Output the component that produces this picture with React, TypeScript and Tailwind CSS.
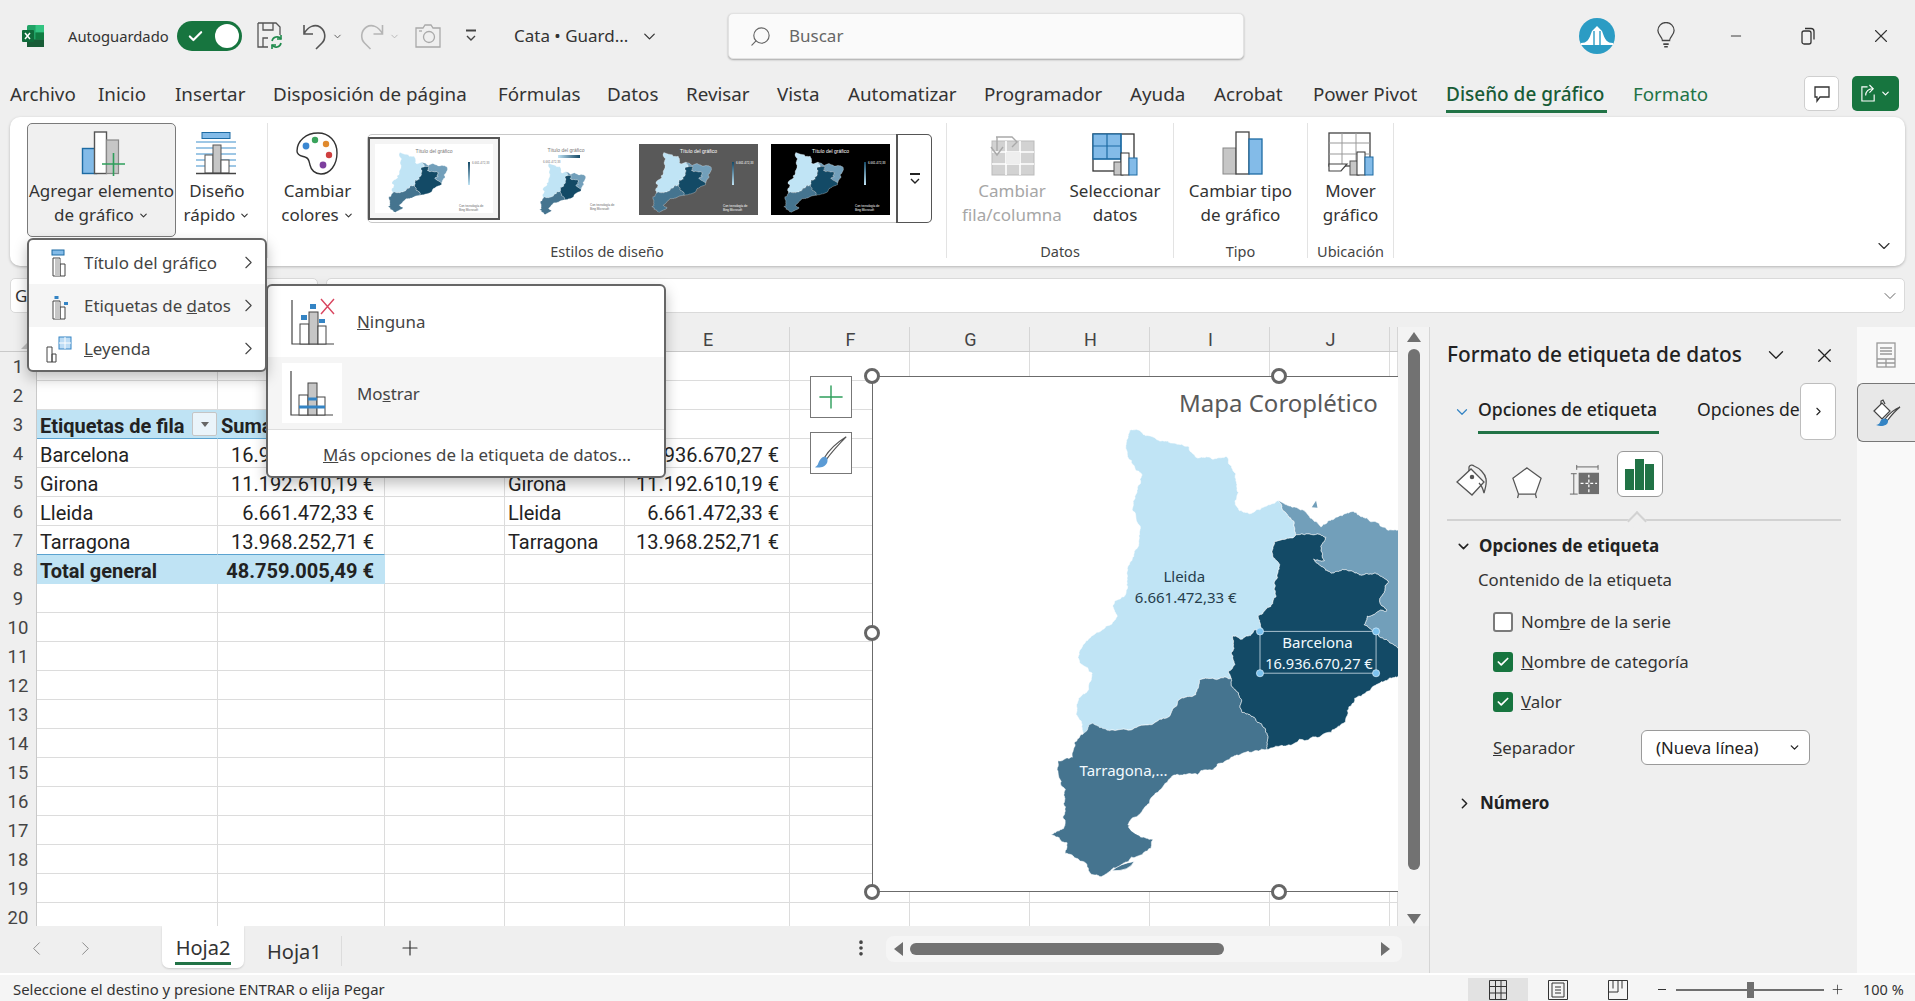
import React from "react";
import { Plus, ChevronDown, ChevronRight, ChevronLeft, X, Search, Check, MoreVertical, Minus } from "lucide-react";

const ui = "font-['Noto_Sans',sans-serif]";
const cellFont = "font-['Roboto',sans-serif]";

// map outlines, in the coordinates of a 1960 x 1960 board
const LLEIDA = "755,225 775,222 800,240 850,255 885,262 920,270 940,300 985,305 1025,298 1040,325 1052,360 1060,400 1050,425 1062,450 1100,455 1130,440 1172,422 1185,450 1215,480 1220,518 1160,538 1155,570 1175,600 1160,650 1165,690 1145,720 1115,745 1125,780 1070,810 1045,800 1040,850 1050,880 1032,900 1040,920 975,920 950,925 940,965 900,975 860,1030 800,1050 700,1065 625,1075 620,1040 605,1020 612,975 640,950 650,905 610,860 630,820 665,790 700,770 720,745 708,715 745,680 755,600 770,560 785,500 765,430 775,400 790,350 750,300 745,260";
const GIRONA = "1172,422 1210,440 1245,450 1260,470 1290,495 1330,470 1380,452 1420,470 1480,505 1540,495 1600,500 1640,530 1650,575 1625,640 1590,690 1605,740 1570,790 1540,860 1506,835 1480,815 1440,790 1412,770 1420,745 1475,730 1455,700 1480,650 1440,625 1400,630 1360,615 1320,625 1290,605 1270,585 1300,590 1290,550 1305,525 1250,515 1220,518 1215,480 1185,450";
const BARCELONA = "1160,538 1220,518 1250,515 1305,525 1290,550 1300,590 1270,585 1290,605 1320,625 1360,615 1400,630 1440,625 1480,650 1455,700 1475,730 1420,745 1412,770 1440,790 1480,815 1506,835 1540,860 1540,895 1506,915 1450,935 1385,975 1345,1050 1320,1070 1230,1090 1140,1118 1135,1060 1105,1030 1070,1015 1060,960 1040,940 1040,920 1032,900 1050,880 1040,850 1045,800 1070,810 1125,780 1115,745 1145,720 1165,690 1160,650 1175,600 1155,570";
const TARRAGONA = "625,1075 650,1045 680,1060 700,1065 800,1050 860,1030 900,975 940,965 950,925 975,920 1040,920 1040,940 1060,960 1070,1015 1105,1030 1135,1060 1140,1118 1060,1135 1000,1160 945,1190 880,1190 850,1220 810,1270 750,1330 775,1355 820,1370 815,1395 760,1420 710,1450 675,1475 645,1465 635,1440 575,1410 580,1380 535,1358 570,1340 570,1270 575,1230 552,1175 555,1150 595,1140 600,1100";

const noise = (x: number, y: number) => {
  const v = Math.sin(x * 12.9898 + y * 78.233) * 43758.5453;
  return v - Math.floor(v) - 0.5;
};

// roughens an outline, same result on both sides of a shared border
const rough = (outline: string) => {
  let pts = outline.split(" ").map((p) => p.split(",").map(Number));
  for (let d = 0; d < 4; d++) {
    const next: number[][] = [];
    pts.forEach((a, i) => {
      const b = pts[(i + 1) % pts.length];
      const mx = (a[0] + b[0]) / 2;
      const my = (a[1] + b[1]) / 2;
      const len = Math.hypot(a[0] - b[0], a[1] - b[1]);
      const amp = d === 0 ? 0.14 : 0.34;
      next.push(a, [mx + noise(mx, my) * len * amp, my + noise(my, mx) * len * amp]);
    });
    pts = next;
  }
  return "M" + pts.map((p) => `${p[0].toFixed(1)} ${p[1].toFixed(1)}`).join("L") + "z";
};

const SHAPES = { l: rough(LLEIDA), g: rough(GIRONA), b: rough(BARCELONA), t: rough(TARRAGONA) };

const Regions = ({ line = "#ffffff", width = 2 }: { line?: string; width?: number }) => (
  <g stroke={line} strokeWidth={width}>
    <path d={SHAPES.l} fill="#c0e4f5" />
    <path d={SHAPES.g} fill="#729fba" />
    <path d={SHAPES.t} fill="#45748f" />
    <path d={SHAPES.b} fill="#134a66" />
  </g>
);

const Thumb = ({ box, text, legendText, wide, mapCls, bg }: { box: string; text: string; legendText: string; wide?: boolean; mapCls: string; bg: string }) => (
  <div className={`relative overflow-hidden ${box} ${bg}`}>
    <p className={`text-center text-[5px] leading-[8px] pt-[3px] font-['Liberation_Sans',sans-serif] ${text}`}>Título del gráfico</p>
    <svg viewBox="520 210 1140 1280" preserveAspectRatio="none" className={`absolute ${mapCls}`}>
      <Regions width={6} />
    </svg>
    {wide ? (
      <div className="absolute left-[52px] top-[12px] h-[3px] w-[22px] bg-gradient-to-r from-[#c0e4f5] to-[#134a66]" />
    ) : (
      <div className="absolute left-[93px] top-[18px] h-[23px] w-[2px] bg-gradient-to-b from-[#134a66] to-[#c0e4f5]" />
    )}
    <p className={`absolute text-[3px] leading-[4px] font-['Liberation_Sans',sans-serif] ${text} ${wide ? "left-[37px] top-[17px]" : "left-[97px] top-[17px]"}`}>6.661.472,33</p>
    <p className={`absolute left-[84px] top-[60px] text-[3px] leading-[4px] font-['Liberation_Sans',sans-serif] ${legendText}`}>
      Con tecnología de
      <br />
      Bing Microsoft
    </p>
  </div>
);

const AddElementIcon = () => (
  <svg viewBox="0 0 46 46" className="w-[46px] h-[46px]">
    <rect x="3.5" y="17.5" width="14" height="25" fill="#83bbe8" stroke="#1d6ba3" strokeWidth="1.4" />
    <rect x="15.5" y="1" width="12" height="41.5" fill="#fff" stroke="#555" strokeWidth="1.4" />
    <rect x="27.5" y="9" width="12" height="33.5" fill="#c6c6c6" stroke="#888" strokeWidth="1.2" />
    <path d="M34.5 22v23M23 33h23" stroke="#2e9e5b" strokeWidth="1.6" />
  </svg>
);

const QuickLayoutIcon = () => (
  <svg viewBox="0 0 46 46" className="w-[46px] h-[46px]">
    <rect x="8" y="1.5" width="28" height="6" fill="#83bbe8" stroke="#1d6ba3" />
    <path d="M2 11h40M2 17h40M2 23h40M2 29h40M2 35h40" stroke="#3f8fcb" strokeWidth="1.2" />
    <rect x="11" y="24" width="8" height="18" fill="#fff" stroke="#555" />
    <rect x="19" y="14" width="8" height="28" fill="#c6c6c6" stroke="#555" />
    <rect x="27" y="29" width="8" height="13" fill="#fff" stroke="#555" />
    <path d="M2 42.5h40" stroke="#444" strokeWidth="1.3" />
  </svg>
);

const PaletteIcon = () => (
  <svg viewBox="0 0 46 46" className="w-[46px] h-[46px]">
    <path d="M23 2C11 2 2 10 2 20c0 5 5 5 8 6 4 1 4 4 5 8 1 5 5 9 11 9 9 0 16-9 16-21S34 2 23 2z" fill="#fff" stroke="#333" strokeWidth="1.4" />
    <circle cx="11" cy="15" r="3.4" fill="#3a87d1" />
    <circle cx="20" cy="9" r="3.2" fill="#3aa35c" />
    <circle cx="31" cy="13" r="3.2" fill="#e08a2e" />
    <circle cx="34" cy="24" r="3.2" fill="#cf3f3f" />
    <circle cx="28" cy="34" r="3.4" fill="#7d3f9e" />
  </svg>
);

const SwitchIcon = () => (
  <svg viewBox="0 0 48 46" className="w-[48px] h-[46px]">
    <rect x="4" y="10" width="42" height="34" fill="#d2d2d2" stroke="#bbb" />
    <path d="M18 10v34M32 10v34M4 21h42M4 33h42" stroke="#fff" strokeWidth="1.6" />
    <rect x="18" y="21" width="14" height="12" fill="#eee" />
    <path d="M8 6h16l5 5-5 5M9 6v14M3 16l6 8 6-8" fill="none" stroke="#a9a9a9" strokeWidth="1.4" />
  </svg>
);

const SelectDataIcon = () => (
  <svg viewBox="0 0 46 46" className="w-[46px] h-[46px]">
    <rect x="1" y="3" width="41" height="37" fill="#fff" stroke="#333" strokeWidth="1.3" />
    <rect x="1" y="3" width="28" height="25" fill="#83bbe8" stroke="#1d6ba3" strokeWidth="1.3" />
    <path d="M15 3v25M1 15h28M29 3v37M1 28h41" stroke="#1d6ba3" strokeWidth="1.2" />
    <rect x="22" y="31" width="9" height="13" fill="#c6c6c6" stroke="#555" />
    <rect x="29" y="22" width="8" height="22" fill="#fff" stroke="#333" />
    <rect x="37" y="27" width="8" height="17" fill="#83bbe8" stroke="#1d6ba3" />
  </svg>
);

const ChangeTypeIcon = () => (
  <svg viewBox="0 0 46 46" className="w-[46px] h-[46px]">
    <rect x="5" y="17" width="13" height="26" fill="#c6c6c6" stroke="#888" />
    <rect x="18" y="1" width="13" height="42" fill="#fff" stroke="#444" strokeWidth="1.3" />
    <rect x="31" y="8" width="13" height="35" fill="#83bbe8" stroke="#1d6ba3" strokeWidth="1.3" />
  </svg>
);

const MoveIcon = () => (
  <svg viewBox="0 0 46 46" className="w-[46px] h-[46px]">
    <rect x="1" y="2" width="41" height="33" fill="#fff" stroke="#444" strokeWidth="1.3" />
    <path d="M14 2v33M28 2v33M1 12h41M1 23h41" stroke="#999" />
    <path d="M1 33v7h12l6-7z" fill="#fff" stroke="#444" strokeWidth="1.2" />
    <rect x="22" y="30" width="9" height="14" fill="#c6c6c6" stroke="#555" />
    <rect x="29" y="21" width="8" height="23" fill="#fff" stroke="#333" />
    <rect x="37" y="26" width="8" height="18" fill="#83bbe8" stroke="#1d6ba3" />
  </svg>
);

const RibbonButton = ({ lines, icon, width, open, muted, arrow }: { lines: string[]; icon: React.ReactNode; width: string; open?: boolean; muted?: boolean; arrow?: boolean }) => (
  <div className={`${width} h-[114px] pt-[7px] flex flex-col items-center rounded-[5px] border ${open ? "border-[#7a7a7a] bg-[#f0f0f0]" : "border-transparent"}`}>
    <div className="h-[46px] flex justify-center">{icon}</div>
    <div className={`text-[17px] leading-[24px] mt-[2px] text-center whitespace-nowrap ${muted ? "text-[#a6a6a6]" : "text-[#333]"}`}>
      <div>{lines[0]}</div>
      <div className="flex items-center justify-center gap-[4px]">
        {lines[1]}
        {arrow && <ChevronDown size={11} strokeWidth={2.4} />}
      </div>
    </div>
  </div>
);

const Group = ({ width, label, children }: { width: string; label?: string; children: React.ReactNode }) => (
  <div className={`${width} h-[135px] border-r border-[#e3e3e3] flex flex-col`}>
    <div className="h-[114px] flex">{children}</div>
    {label && <div className="flex-1 text-center text-[14.5px] leading-[19px] pt-[5px] text-[#444] whitespace-nowrap">{label}</div>}
  </div>
);

const TITLE_TABS = [
  { label: "Archivo", w: "w-[88px]" },
  { label: "Inicio", w: "w-[77px]" },
  { label: "Insertar", w: "w-[98px]" },
  { label: "Disposición de página", w: "w-[225px]" },
  { label: "Fórmulas", w: "w-[109px]" },
  { label: "Datos", w: "w-[79px]" },
  { label: "Revisar", w: "w-[91px]" },
  { label: "Vista", w: "w-[71px]" },
  { label: "Automatizar", w: "w-[136px]" },
  { label: "Programador", w: "w-[146px]" },
  { label: "Ayuda", w: "w-[84px]" },
  { label: "Acrobat", w: "w-[99px]" },
  { label: "Power Pivot", w: "w-[133px]" },
];

const TitleBar = () => (
  <div className="h-[72px] flex items-center pl-[21px] text-[#333]">
    <svg viewBox="0 0 24 24" className="w-[24px] h-[24px] shrink-0">
      <rect x="6" y="1" width="17" height="22" rx="1.5" fill="#21a366" />
      <rect x="14.5" y="1" width="8.5" height="7.5" fill="#33c481" />
      <rect x="14.5" y="8.5" width="8.5" height="7" fill="#107c41" />
      <rect x="6" y="15.5" width="17" height="7.5" fill="#185c37" />
      <rect x="1" y="6" width="12" height="12" rx="1" fill="#0f6b3a" />
      <path d="M4 9l5 6M9 9l-5 6" stroke="#fff" strokeWidth="1.5" />
    </svg>
    <span className="ml-[23px] w-[100px] text-[14.8px] whitespace-nowrap">Autoguardado</span>
    <div className="ml-[9px] w-[65px] h-[30px] rounded-full bg-[#17753f] flex items-center justify-between pl-[10px] pr-[3px]">
      <Check size={17} strokeWidth={3} className="text-white" />
      <span className="w-[24px] h-[24px] rounded-full bg-white" />
    </div>
    <svg viewBox="0 0 26 30" className="ml-[15px] w-[26px] h-[30px]" fill="none" stroke="#555" strokeWidth="1.3">
      <path d="M1 2h18l4 4v8M1 2v24h10M6 2v7h10V2M6 26v-9h5" />
      <path d="M15 20a5 5 0 0 1 9-2M24 22a5 5 0 0 1-9 2" stroke="#1f8a4c" strokeWidth="1.6" />
      <path d="M24 14v4h-4M15 28v-4h4" stroke="#1f8a4c" strokeWidth="1.6" />
    </svg>
    <svg viewBox="0 0 26 30" className="ml-[19px] w-[26px] h-[30px]" fill="none" stroke="#555" strokeWidth="1.6">
      <path d="M2 4v9h9M2 13C6 5 13 3 18 6c6 4 6 12 2 16l-6 6" />
    </svg>
    <ChevronDown size={11} className="ml-[4px] text-[#555]" strokeWidth={2} />
    <svg viewBox="0 0 26 30" className="ml-[15px] w-[27px] h-[30px]" fill="none" stroke="#b5b5b5" strokeWidth="1.6">
      <path d="M24 4v9h-9M24 13C20 5 13 3 8 6c-6 4-6 12-2 16l6 6" />
    </svg>
    <ChevronDown size={11} className="ml-[4px] text-[#b5b5b5]" strokeWidth={2} />
    <svg viewBox="0 0 26 30" className="ml-[15px] w-[26px] h-[30px]" fill="none" stroke="#a9a9a9" strokeWidth="1.3">
      <path d="M1 7h7l2-3h6l2 3h7v19H1z" />
      <circle cx="14" cy="16" r="5.5" />
      <path d="M4 10h3" />
    </svg>
    <svg viewBox="0 0 12 14" className="ml-[24px] w-[12px] h-[14px]" fill="none" stroke="#444" strokeWidth="1.4">
      <path d="M1 1.5h10" strokeWidth="2" />
      <path d="M2 7l4 4 4-4" />
    </svg>
    <span className="ml-[37px] w-[119px] text-[17px] whitespace-nowrap">Cata • Guard...</span>
    <ChevronDown size={19} className="ml-[7px] text-[#333]" strokeWidth={1.6} />
    <div className="ml-[69px] w-[516px] h-[46px] rounded-[5px] bg-[#fafafa] border border-[#e2e2e2] shadow-[0_1px_2px_rgba(0,0,0,0.3)] flex items-center pl-[20px] text-[#666]">
      <Search size={23} strokeWidth={1.2} className="-scale-x-100" />
      <span className="ml-[17px] text-[17px]">Buscar</span>
    </div>
    <svg viewBox="0 0 36 36" className="ml-[335px] w-[36px] h-[36px]">
      <circle cx="18" cy="18" r="18" fill="#2b9cc4" />
      <path d="M2 25c6 0 8-3 11-12l5-5 5 5c3 9 5 12 11 12v2H2z" fill="#fff" />
      <path d="M15 13v14M21 13v14" stroke="#2b9cc4" strokeWidth="1.4" />
    </svg>
    <svg viewBox="0 0 20 30" className="ml-[42px] w-[18px] h-[28px]" fill="none" stroke="#444" strokeWidth="1.4">
      <path d="M6 20c0-4-5-6-5-11a9 9 0 0 1 18 0c0 5-5 7-5 11z" />
      <path d="M7 24h6M8 27h4" strokeWidth="1.8" />
    </svg>
    <Minus size={16} strokeWidth={1.4} className="ml-[53px] text-[#333]" />
    <svg viewBox="0 0 14 18" className="ml-[57px] w-[14px] h-[18px]" fill="none" stroke="#333" strokeWidth="1.3">
      <rect x="1" y="4" width="9" height="13" rx="2" />
      <path d="M4 1.5h6a3 3 0 0 1 3 3v8" />
    </svg>
    <X size={22} strokeWidth={1.2} className="ml-[55px] text-[#333]" />
  </div>
);

const TabRow = () => (
  <div className="h-[45px] flex items-center pl-[10px] pr-[16px] text-[18.8px] text-[#333]">
    {TITLE_TABS.map((t) => (
      <div key={t.label} className={`${t.w} whitespace-nowrap`}>{t.label}</div>
    ))}
    <div className="w-[187px] text-[19px] font-medium text-[#185c37] relative whitespace-nowrap">
      Diseño de gráfico
      <span className="absolute left-0 w-[161px] top-[30px] h-[3px] bg-[#217346]" />
    </div>
    <div className="text-[#217346]">Formato</div>
    <div className="ml-auto -mt-[2px] w-[35px] h-[35px] rounded-[5px] bg-white border border-[#cfcfcf] flex items-center justify-center">
      <svg viewBox="0 0 18 18" className="w-[18px] h-[18px]" fill="none" stroke="#333" strokeWidth="1.3">
        <path d="M2 2h14v10H7l-3 4v-4H2z" />
      </svg>
    </div>
    <div className="ml-[13px] -mt-[2px] w-[47px] h-[35px] rounded-[5px] bg-[#17753f] flex items-center justify-center gap-[3px]">
      <svg viewBox="0 0 18 20" className="w-[17px] h-[19px]" fill="none" stroke="#fff" strokeWidth="1.2">
        <path d="M8 3H2v15h13v-7M6 12c0-4 3-7 7-7M10 1l4 4-4 4" />
      </svg>
      <ChevronDown size={11} strokeWidth={2.6} className="text-white" />
    </div>
  </div>
);

const Ribbon = () => (
  <div className="relative mx-[10px] h-[149px] bg-white rounded-[10px] shadow-[0_1px_3px_rgba(0,0,0,0.25)] flex pl-[17px] pt-[6px]">
    <Group width="w-[241px]">
      <RibbonButton width="w-[149px]" open arrow lines={["Agregar elemento", "de gráfico"]} icon={<AddElementIcon />} />
      <RibbonButton width="w-[82px]" arrow lines={["Diseño", "rápido"]} icon={<QuickLayoutIcon />} />
    </Group>
    <Group width="w-[679px]" label="Estilos de diseño">
      <RibbonButton width="w-[99px]" arrow lines={["Cambiar", "colores"]} icon={<PaletteIcon />} />
      <div className="mt-[11px] w-[565px] h-[89px] rounded-[5px] border border-[#c8c8c8] flex">
        <div className="mt-[2px] w-[132px] h-[83px] border-2 border-[#555] bg-[#f4f4f4] p-[5px]">
          <Thumb box="w-[118px] h-[69px]" bg="bg-white" text="text-[#777]" legendText="text-[#666]" mapCls="left-[12px] top-[8px] w-[61px] h-[61px]" />
        </div>
        <div className="ml-[6px] mt-[8px]">
          <Thumb box="w-[120px] h-[73px]" bg="bg-white" text="text-[#777]" legendText="text-[#666]" wide mapCls="left-[33px] top-[20px] w-[47px] h-[52px]" />
        </div>
        <div className="ml-[13px] mt-[9px]">
          <Thumb box="w-[119px] h-[71px]" bg="bg-[#595959]" text="text-white" legendText="text-white" mapCls="left-[12px] top-[8px] w-[61px] h-[61px]" />
        </div>
        <div className="ml-[13px] mt-[9px]">
          <Thumb box="w-[119px] h-[71px]" bg="bg-black" text="text-white" legendText="text-white" mapCls="left-[12px] top-[8px] w-[61px] h-[61px]" />
        </div>
        <div className="ml-auto w-[36px] -my-px -mr-px border-y border-r border-l-2 border-[#555] rounded-r-[5px] bg-white flex items-center justify-center">
          <svg viewBox="0 0 12 14" className="w-[12px] h-[14px]" fill="none" stroke="#222" strokeWidth="1.4">
            <path d="M1 2h10" strokeWidth="2" />
            <path d="M2 7l4 4 4-4" />
          </svg>
        </div>
      </div>
    </Group>
    <Group width="w-[227px]" label="Datos">
      <RibbonButton width="w-[130px]" muted lines={["Cambiar", "fila/columna"]} icon={<SwitchIcon />} />
      <RibbonButton width="w-[76px]" lines={["Seleccionar", "datos"]} icon={<SelectDataIcon />} />
    </Group>
    <Group width="w-[134px]" label="Tipo">
      <RibbonButton width="w-[134px]" lines={["Cambiar tipo", "de gráfico"]} icon={<ChangeTypeIcon />} />
    </Group>
    <Group width="w-[86px]" label="Ubicación">
      <RibbonButton width="w-[86px]" lines={["Mover", "gráfico"]} icon={<MoveIcon />} />
    </Group>
    <ChevronDown size={20} strokeWidth={1.4} className="absolute right-[11px] bottom-[10px] text-[#333]" />
  </div>
);

const FormulaBar = () => (
  <div className="mt-[12px] mx-[10px] h-[35px] flex gap-[8px] text-[17px] text-[#333]">
    <div className="w-[308px] rounded-[5px] bg-white border border-[#dadada] pl-[4px] flex items-center">Gráfico 1</div>
    <div className="flex-1 rounded-[5px] bg-white border border-[#dadada] flex items-center justify-end pr-[4px]">
      <ChevronDown size={20} strokeWidth={1.2} className="text-[#666]" />
    </div>
  </div>
);

const COLS = [
  { id: "A", w: "w-[181px]" },
  { id: "B", w: "w-[167px]" },
  { id: "C", w: "w-[120px]" },
  { id: "D", w: "w-[120px]" },
  { id: "E", w: "w-[165px]" },
  { id: "F", w: "w-[120px]" },
  { id: "G", w: "w-[120px]" },
  { id: "H", w: "w-[120px]" },
  { id: "I", w: "w-[120px]" },
  { id: "J", w: "w-[120px]" },
  { id: "K", w: "w-[8px]" },
];

const ROWS: Record<number, string[]> = {
  3: ["Etiquetas de fila", "Suma de Total"],
  4: ["Barcelona", "16.936.670,27 €", "", "Barcelona", "16.936.670,27 €"],
  5: ["Girona", "11.192.610,19 €", "", "Girona", "11.192.610,19 €"],
  6: ["Lleida", "6.661.472,33 €", "", "Lleida", "6.661.472,33 €"],
  7: ["Tarragona", "13.968.252,71 €", "", "Tarragona", "13.968.252,71 €"],
  8: ["Total general", "48.759.005,49 €"],
};

const Cell = ({ row, col, w }: { row: number; col: number; w: string }) => {
  const text = ROWS[row]?.[col] ?? "";
  const accent = (row === 3 || row === 8) && col < 2;
  const money = col === 1 || col === 4;
  return (
    <div
      className={`${w} shrink-0 relative h-full pt-[3px] flex items-center whitespace-nowrap overflow-hidden border-r border-b border-[#dcdcdc] ${money && row > 3 ? "justify-end pr-[10px]" : "pl-[3px]"} ${accent ? "bg-[#bfe3f4] font-bold border-r-transparent" : ""} ${row === 3 && col < 2 ? "border-b-[#5ba3d0]" : ""} ${row === 7 && col < 2 ? "border-b-[#5ba3d0]" : ""} ${row === 8 && col < 2 ? "border-b-[#bfe3f4]" : ""}`}
    >
      {text}
      {row === 3 && col === 0 && (
        <span className="absolute right-0 top-[2px] w-[25px] h-[24px] bg-[#eaf4fa] border border-[#c5c5c5] rounded-[2px] flex items-center justify-center">
          <span className="w-0 h-0 border-x-[4px] border-x-transparent border-t-[5px] border-t-[#666]" />
        </span>
      )}
    </div>
  );
};

const Handle = ({ pos }: { pos: string }) => (
  <span className={`absolute w-[16px] h-[16px] rounded-full bg-white border-[3px] border-[#666] ${pos}`} />
);

const Chart = () => (
  <div className="absolute left-[872px] top-[49px] w-[600px] h-[516px] bg-white border border-[#6b6b6b]">
    <svg viewBox="0 0 1960 1960" className="absolute left-[-13px] top-[-27px] w-[700px] h-[700px]">
      <Regions width={1.5} />
      <path d="M1265 440l12-18 4 20z" fill="#729fba" />
      <path d="M750 1335q20-14 36 18 12 6 20 10-40 0-56-28z" fill="#fff" />
      <path d="M706 1458q22-20 62-26-14 28-62 26z" fill="#45748f" stroke="#fff" strokeWidth="2" />
      <g fontFamily="Noto Sans, sans-serif" fontSize="42" textAnchor="middle">
        <text x="908" y="650" fill="#263d4c">Lleida</text>
        <text x="912" y="708" fill="#263d4c">6.661.472,33 €</text>
        <text x="1281" y="834" fill="#f2fafe">Barcelona</text>
        <text x="1285" y="892" fontSize="41" fill="#f2fafe">16.936.670,27 €</text>
        <text x="738" y="1192" fill="#f2fafe">Tarragona,...</text>
      </g>
      <rect x="1120" y="788" width="325" height="117" fill="none" stroke="#9fb9c8" strokeWidth="3" />
      {[[1120, 788], [1445, 788], [1120, 905], [1445, 905]].map(([cx, cy]) => (
        <circle key={`${cx}-${cy}`} cx={cx} cy={cy} r="10" fill="#7cc2ee" stroke="#d8eefc" strokeWidth="2" />
      ))}
    </svg>
    <p className={`absolute left-[306px] top-[11px] text-[24px] leading-[30px] text-[#595959] whitespace-nowrap ${ui}`}>Mapa Coroplético</p>
    <Handle pos="left-[-9px] top-[-9px]" />
    <Handle pos="left-[398px] top-[-9px]" />
    <Handle pos="left-[-9px] top-[248px]" />
    <Handle pos="left-[-9px] bottom-[-9px]" />
    <Handle pos="left-[398px] bottom-[-9px]" />
  </div>
);

const Sheet = () => (
  <div className={`relative w-[1398px] h-[599px] overflow-hidden bg-white ${cellFont} text-[20px] text-[#222]`}>
    <div className="flex h-[25px] bg-[#efefef] border-b border-[#c9c9c9]">
      <div className="w-[37px] shrink-0 relative">
        <span className="absolute right-[2px] bottom-[2px] w-0 h-0 border-l-[14px] border-l-transparent border-b-[14px] border-b-[#bdbdbd]" />
      </div>
      {COLS.map((c) => (
        <div key={c.id} className={`${c.w} shrink-0 border-r border-[#d5d5d5] flex items-center justify-center pl-[2px] text-[18px] text-[#444]`}>
          {c.id !== "K" && c.id}
        </div>
      ))}
    </div>
    {Array.from({ length: 20 }, (_, i) => i + 1).map((row) => (
      <div key={row} className="flex h-[29px]">
        <div className="w-[37px] shrink-0 bg-[#efefef] border-r border-[#c9c9c9] flex items-center justify-center pt-[3px] text-[18.5px] text-[#444]">{row}</div>
        {COLS.map((c, col) => (
          <Cell key={c.id} row={row} col={col} w={c.w} />
        ))}
      </div>
    ))}
    <div className="absolute left-[810px] top-[49px] w-[42px] h-[42px] bg-white border border-[#777] flex items-center justify-center">
      <Plus size={38} strokeWidth={0.9} className="text-[#2e9e5b]" />
    </div>
    <div className="absolute left-[810px] top-[105px] w-[42px] h-[42px] bg-white border border-[#777] flex items-center justify-center">
      <svg viewBox="0 0 40 40" className="w-[38px] h-[38px]">
        <path d="M36 3C30 9 20 20 15 27l-2-2C18 17 28 8 36 3z" fill="#fff" stroke="#555" strokeWidth="1.2" />
        <path d="M13 24c3 0 4 3 3 6-2 5-8 6-13 5 4-2 3-4 5-7 1-2 3-4 5-4z" fill="#5b9bd5" />
      </svg>
    </div>
    <Chart />
  </div>
);

const VScroll = () => (
  <div className="w-[31px] h-[599px] bg-[#f3f3f3] relative flex flex-col items-center">
    <span className="mt-[5px] w-0 h-0 border-x-[7px] border-x-transparent border-b-[10px] border-b-[#6f6f6f]" />
    <span className="mt-[7px] w-[12px] h-[521px] rounded-full bg-[#727272]" />
    <span className="mt-[44px] w-0 h-0 border-x-[7px] border-x-transparent border-t-[10px] border-t-[#6f6f6f]" />
  </div>
);

const SheetTabs = () => (
  <div className="h-[47px] flex items-start text-[#333]">
    <ChevronLeft size={23} strokeWidth={1} className="ml-[25px] mt-[11px] text-[#888]" />
    <ChevronRight size={23} strokeWidth={1} className="ml-[26px] mt-[11px] text-[#888]" />
    <div className="ml-[65px] w-[82px] h-[42px] bg-white rounded-b-[7px] shadow-[0_1px_2px_rgba(0,0,0,0.15)] flex flex-col items-center">
      <span className="text-[20px] leading-[26px] mt-[9px]">Hoja2</span>
      <span className="w-[56px] h-[3px] bg-[#217346] mt-[1px]" />
    </div>
    <span className="ml-[23px] text-[20px] leading-[26px] mt-[13px]">Hoja1</span>
    <span className="ml-[19px] mt-[10px] h-[30px] border-l border-[#dcdcdc]" />
    <Plus size={24} strokeWidth={1.2} className="ml-[56px] mt-[10px]" />
    <MoreVertical size={20} strokeWidth={2.4} className="ml-[429px] mt-[12px] text-[#444]" />
    <div className="ml-[15px] mt-[10px] w-[516px] h-[26px] rounded-[8px] bg-[#f5f5f5] flex items-center pl-[8px]">
      <span className="w-0 h-0 border-y-[7px] border-y-transparent border-r-[9px] border-r-[#6f6f6f]" />
      <span className="ml-[7px] w-[314px] h-[12px] rounded-full bg-[#727272]" />
      <span className="ml-[157px] w-0 h-0 border-y-[7px] border-y-transparent border-l-[9px] border-l-[#6f6f6f]" />
    </div>
  </div>
);

const CheckRow = ({ checked, label }: { checked?: boolean; label: React.ReactNode }) => (
  <div className="flex items-center h-[20px] mb-[20px]">
    <span className={`w-[20px] h-[20px] rounded-[3px] flex items-center justify-center ${checked ? "bg-[#17753f]" : "bg-white border-2 border-[#7a7a7a]"}`}>
      {checked && <Check size={14} strokeWidth={3} className="text-white" />}
    </span>
    <span className="ml-[8px] text-[16.8px] text-[#333] whitespace-nowrap">{label}</span>
  </div>
);

const FormatPane = () => (
  <div className="w-[428px] h-[646px] border-l border-[#d5d5d5] bg-[#efefef] pl-[17px] text-[#222]">
    <div className="h-[54px] flex items-center pt-[2px]">
      <span className="text-[20.8px] font-medium whitespace-nowrap w-[316px]">Formato de etiqueta de datos</span>
      <ChevronDown size={26} strokeWidth={1.2} />
      <X size={23} strokeWidth={1.3} className="ml-[24px]" />
    </div>
    <div className="h-[57px] flex items-start relative">
      <ChevronDown size={18} strokeWidth={1.6} className="mt-[22px] ml-[6px] text-[#3484c4]" />
      <div className="ml-[7px] w-[181px] h-[53px] border-b-[3px] border-[#217346] pt-[15px] text-[17.6px] font-medium whitespace-nowrap">Opciones de etiqueta</div>
      <div className="ml-[38px] w-[103px] overflow-hidden pt-[15px] text-[17.6px] whitespace-nowrap">Opciones de texto</div>
      <div className="w-[36px] h-[57px] mt-[2px] rounded-[6px] bg-white border border-[#bdbdbd] flex items-center justify-center">
        <ChevronRight size={13} strokeWidth={2} />
      </div>
    </div>
    <div className="mt-[21px] h-[62px] flex items-start relative border-b-2 border-[#d2d2d2] w-[394px]">
      <svg viewBox="0 0 34 34" className="mt-[4px] ml-[8px] w-[34px] h-[34px]" fill="none" stroke="#555" strokeWidth="1.3">
        <path d="M2 19L16 6l13 13-12 13z" fill="#fff" />
        <path d="M14 8V4a3 3 0 0 1 5-1c5 2 11 7 12 13 1 5-1 10-2 14-1-4-2-7-5-10" />
        <circle cx="17" cy="14" r="1.6" fill="#555" />
      </svg>
      <svg viewBox="0 0 34 34" className="mt-[5px] ml-[22px] w-[32px] h-[36px]" fill="#fff" stroke="#555" strokeWidth="1.3">
        <path d="M17 2l15 11-6 17H8L2 13z" />
        <path d="M8 30l-1 4M26 30l1 4" />
      </svg>
      <svg viewBox="0 0 34 34" className="mt-[5px] ml-[24px] w-[33px] h-[33px]">
        <path d="M10 3h22M10 1v5M32 1v5M4 10h6M7 10v21M3 31h8" fill="none" stroke="#666" />
        <rect x="12" y="9" width="21" height="22" fill="#6e6e6e" />
        <path d="M22.5 11v18M14 20h17" stroke="#fff" strokeWidth="1.3" strokeDasharray="3 2" />
      </svg>
      <div className="-mt-[8px] ml-[17px] w-[46px] h-[46px] rounded-[6px] bg-white border border-[#999] flex items-center justify-center">
        <svg viewBox="0 0 30 32" className="w-[30px] h-[32px]" fill="#217346">
          <rect x="0" y="11" width="9" height="21" />
          <rect x="10" y="1" width="9" height="31" />
          <rect x="20" y="6" width="9" height="26" />
        </svg>
      </div>
      <span className="absolute left-[183px] bottom-[-2px] w-[14px] h-[14px] rotate-45 translate-y-[7px] bg-[#efefef] border-l-2 border-t-2 border-[#d2d2d2]" />
    </div>
    <div className="mt-[15px] flex items-center h-[20px] pl-[8px]">
      <ChevronDown size={17} strokeWidth={2.2} />
      <span className="ml-[7px] text-[17px] font-bold">Opciones de etiqueta</span>
    </div>
    <p className="mt-[13px] ml-[31px] text-[16.8px] leading-[22px] text-[#333]">Contenido de la etiqueta</p>
    <div className="mt-[21px] ml-[46px]">
      <CheckRow label={<>Nom<span className="underline">b</span>re de la serie</>} />
      <CheckRow checked label={<><span className="underline">N</span>ombre de categoría</>} />
      <CheckRow checked label={<><span className="underline">V</span>alor</>} />
    </div>
    <div className="ml-[46px] -mt-[2px] flex items-center h-[35px]">
      <span className="w-[148px] text-[16.8px] text-[#333]"><span className="underline">S</span>eparador</span>
      <div className="w-[169px] h-[35px] rounded-[6px] bg-white border border-[#9a9a9a] flex items-center justify-between pl-[14px] pr-[8px] text-[16.8px]">
        (Nueva línea)
        <ChevronDown size={13} strokeWidth={2.4} />
      </div>
    </div>
    <div className="mt-[28px] pl-[9px] flex items-center h-[20px]">
      <ChevronRight size={17} strokeWidth={2.2} />
      <span className="ml-[7px] text-[17px] font-bold">Número</span>
    </div>
  </div>
);

const SideStrip = () => (
  <div className="w-[58px] h-[646px] bg-[#f9f9f9] flex flex-col items-stretch">
    <div className="h-[56px] flex items-center justify-center">
      <svg viewBox="0 0 20 26" className="w-[20px] h-[26px]" fill="none" stroke="#999" strokeWidth="1.3">
        <rect x="1" y="1" width="18" height="24" />
        <path d="M1 17h18M1 21h18M10 17v8M4 6h12M4 9h12M4 12h12" />
      </svg>
    </div>
    <div className="h-[59px] rounded-l-[6px] bg-[#e8e8e8] border border-r-0 border-[#777] flex items-center justify-center">
      <svg viewBox="0 0 30 30" className="w-[30px] h-[30px]" fill="none" stroke="#444" strokeWidth="1.2">
        <path d="M2 13l8-8 8 8-8 8z" fill="#fff" />
        <path d="M9 6V3l2-1 2 4" />
        <path d="M28 9C23 13 18 19 15 23l-2-2C17 16 23 11 28 9z" fill="#fff" />
        <path d="M13 21c2 0 3 2 2 4-1 2-6 3-9 2 3-1 2-3 4-5 1-1 2-1 3-1z" fill="#3484c4" stroke="#3484c4" />
      </svg>
    </div>
  </div>
);

const StatusBar = () => (
  <div className="h-[28px] bg-[#f5f5f5] border-t-2 border-white flex items-center pl-[13px] pt-[3px] text-[14.9px] text-[#333]">
    <span className="w-[1455px] whitespace-nowrap">Seleccione el destino y presione ENTRAR o elija Pegar</span>
    <div className="w-[60px] h-[23px] bg-[#e2e2e2] flex items-center justify-center">
      <svg viewBox="0 0 18 20" className="w-[18px] h-[20px]" fill="none" stroke="#333">
        <path d="M.5.5h17v19H.5zM6.5.5v19M12 .5v19M.5 6.5h17M.5 13h17" />
      </svg>
    </div>
    <svg viewBox="0 0 20 20" className="ml-[20px] w-[20px] h-[20px]" fill="none" stroke="#333">
      <path d="M.5.5h19v19H.5zM4 3h12v14H4zM7 7h6M7 10h6M7 13h6" />
    </svg>
    <svg viewBox="0 0 20 20" className="ml-[40px] w-[20px] h-[20px]" fill="none" stroke="#333">
      <path d="M.5.5h19v19H.5zM.5 12H10V.5M5 .5v8M14 .5v8" />
    </svg>
    <span className="ml-[30px] w-[8px] border-t border-[#333]" />
    <div className="ml-[10px] w-[148px] relative h-[16px] flex items-center">
      <span className="w-full border-t-2 border-[#6f6f6f]" />
      <span className="absolute left-[71px] w-[7px] h-[16px] bg-[#6f6f6f]" />
    </div>
    <Plus size={15} strokeWidth={1.2} className="ml-[6px]" />
    <span className="ml-[18px] whitespace-nowrap text-[14.5px]">100 %</span>
  </div>
);

const MenuIcon = ({ kind }: { kind: string }) => (
  <svg viewBox="0 0 28 28" className="w-[28px] h-[28px]" fill="none">
    {kind === "legend" ? (
      <>
        <path d="M2 12h5v15H2zM7 19h4v8H7z" fill="#fff" stroke="#444" />
        <rect x="14" y="2" width="12" height="12" fill="#bcdcf5" stroke="#3484c4" />
        <path d="M20 2v12M14 8h12" stroke="#fff" />
      </>
    ) : (
      <>
        <path d="M8 9h7v18H8zM15 15h5v12h-5z" fill="#fff" stroke="#444" />
        <rect x="10" y="10" width="5" height="17" fill="#c6c6c6" />
        {kind === "title" ? (
          <rect x="7" y="1" width="12" height="5" fill="#83bbe8" stroke="#1d6ba3" />
        ) : (
          <>
            <rect x="9.5" y="4" width="4" height="3" fill="#3484c4" />
            <rect x="19" y="10" width="4" height="3" fill="#3484c4" />
          </>
        )}
      </>
    )}
  </svg>
);

const ChartMenu = () => (
  <div className={`absolute left-[27px] top-[238px] w-[240px] h-[134px] bg-white rounded-[6px] border-2 border-[#666] shadow-[0_6px_14px_rgba(0,0,0,0.25)] flex flex-col text-[16.9px] text-[#444] z-20 pt-[1px] ${ui}`}>
    {[
      { k: "title", label: <>Título del gráfi<span className="underline">c</span>o</>, on: false },
      { k: "labels", label: <>Etiquetas de <span className="underline">d</span>atos</>, on: true },
      { k: "legend", label: <><span className="underline">L</span>eyenda</>, on: false },
    ].map((m) => (
      <div key={m.k} className={`h-[44px] flex items-center pl-[16px] pr-[6px] ${m.on ? "bg-[#f5f5f5]" : ""}`}>
        <MenuIcon kind={m.k} />
        <span className="ml-[11px] flex-1 whitespace-nowrap">{m.label}</span>
        <ChevronRight size={21} strokeWidth={1.3} />
      </div>
    ))}
  </div>
);

const LabelsIcon = ({ none }: { none?: boolean }) => (
  <svg viewBox="0 0 48 48" className="w-[48px] h-[48px]" fill="none">
    <path d="M3 2v44h42" stroke="#444" strokeWidth="1.2" />
    <rect x="11" y="26" width="9" height="20" fill="#fff" stroke="#444" />
    <rect x="20" y="14" width="9" height="32" fill="#c6c6c6" stroke="#444" />
    <rect x="29" y="28" width="8" height="18" fill="#fff" stroke="#444" />
    {none ? (
      <>
        <rect x="12" y="17" width="6" height="5" fill="#3484c4" />
        <rect x="21" y="6" width="6" height="5" fill="#3484c4" />
        <rect x="30" y="21" width="6" height="4" fill="#3484c4" />
        <path d="M32 1l13 15M45 1L32 16" stroke="#d9455f" strokeWidth="1.4" />
      </>
    ) : (
      <path d="M11 38h26M20 30h9" stroke="#3484c4" strokeWidth="3" />
    )}
  </svg>
);

const LabelsSubMenu = () => (
  <div className={`absolute left-[266px] top-[284px] w-[400px] h-[194px] bg-white rounded-[6px] border-2 border-[#666] shadow-[0_6px_14px_rgba(0,0,0,0.25)] flex flex-col text-[16.9px] text-[#444] z-10 ${ui}`}>
    <div className="h-[71px] flex items-center pl-[21px] pt-[1px]">
      <LabelsIcon none />
      <span className="ml-[20px]"><span className="underline">N</span>inguna</span>
    </div>
    <div className="h-[73px] bg-[#f5f5f5] flex items-center pl-[14px] border-b border-[#dedede]">
      <div className="w-[60px] h-[60px] bg-white flex items-center justify-center">
        <LabelsIcon />
      </div>
      <span className="ml-[15px] pt-[1px]">Mo<span className="underline">s</span>trar</span>
    </div>
    <div className="flex-1 flex items-center justify-center pl-[22px] pt-[3px]">
      <span><span className="underline">M</span>ás opciones de la etiqueta de datos...</span>
    </div>
  </div>
);

export default function App() {
  return (
    <div className={`relative w-[1915px] h-[1001px] overflow-hidden bg-[#efefef] ${ui}`}>
      <TitleBar />
      <TabRow />
      <Ribbon />
      <FormulaBar />
      <div className="mt-[14px] flex h-[646px]">
        <div className="w-[1429px] flex flex-col">
          <div className="flex">
            <Sheet />
            <VScroll />
          </div>
          <SheetTabs />
        </div>
        <FormatPane />
        <SideStrip />
      </div>
      <StatusBar />
      <ChartMenu />
      <LabelsSubMenu />
    </div>
  );
}
